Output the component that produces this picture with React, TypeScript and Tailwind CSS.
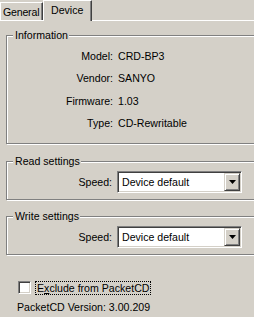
const sunken =
  'border border-t-[#808080] border-l-[#808080] border-r-white border-b-white shadow-[inset_1px_1px_0_#404040,inset_-1px_-1px_0_#d4d0c8]';
const raised =
  'border border-t-[#d4d0c8] border-l-[#d4d0c8] border-r-[#404040] border-b-[#404040] shadow-[inset_1px_1px_0_#ffffff,inset_-1px_-1px_0_#808080]';
const etched =
  'relative border border-[#808080] shadow-[inset_1px_1px_0_#ffffff,1px_1px_0_#ffffff]';

function Group({
  title,
  className,
  children,
}: {
  title: string;
  className: string;
  children: React.ReactNode;
}) {
  return (
    <div className={`${etched} ${className}`}>
      <span className="absolute -top-[7px] left-[6px] bg-[#d4d0c8] pl-[2px] pr-[1px]">
        {title}
      </span>
      {children}
    </div>
  );
}

function InfoRow({ label, value, className }: { label: string; value: string; className: string }) {
  return (
    <div className={`flex ${className}`}>
      <span className="w-[106px] text-right">{label}</span>
      <span className="pl-[5px]">{value}</span>
    </div>
  );
}

function Combo() {
  return (
    <div className="mt-[9px] flex items-center">
      <span className="w-[105px] text-right">Speed:</span>
      <div className={`ml-[5px] flex h-[22px] w-[125px] items-center bg-white p-[1px] ${sunken}`}>
        <span className="flex-1 pl-[3px]">Device default</span>
        <div className={`flex h-[18px] w-[16px] items-center justify-center bg-[#d4d0c8] ${raised}`}>
          <svg width="7" height="4" viewBox="0 0 7 4">
            <path d="M0 0h7L3.5 4z" fill="#000" />
          </svg>
        </div>
      </div>
    </div>
  );
}

export default function App() {
  return (
    <div className="h-[317px] w-[254px] overflow-hidden bg-[#d4d0c8] font-['Liberation_Sans',Arial,sans-serif] text-[10.6px] leading-[13px] text-black">
      <div className="flex h-[20px] items-end">
        <div className="h-[18px] w-[43px] whitespace-nowrap border-l border-t border-r border-l-white border-t-white border-r-[#404040] pl-[2px] pt-[3px] tracking-[-0.2px] shadow-[inset_-1px_0_0_#808080]">
          General
        </div>
        <div className="relative z-10 -mb-px h-[21px] w-[49px] border-l border-t border-r border-l-white border-t-white border-r-[#404040] bg-[#d4d0c8] pl-[7px] pt-[3px] shadow-[inset_-1px_0_0_#808080]">
          Device
        </div>
      </div>
      <div className="border-t border-white pl-[6px] pt-[14px]">
        <div className="w-[270px]">
          <Group title="Information" className="h-[109px]">
            <InfoRow label="Model:" value="CRD-BP3" className="mt-[14px]" />
            <InfoRow label="Vendor:" value="SANYO" className="mt-[9px]" />
            <InfoRow label="Firmware:" value="1.03" className="mt-[10px]" />
            <InfoRow label="Type:" value="CD-Rewritable" className="mt-[9px]" />
          </Group>
          <Group title="Read settings" className="mt-[17px] h-[39px]">
            <Combo />
          </Group>
          <Group title="Write settings" className="mt-[16px] h-[39px]">
            <Combo />
          </Group>
        </div>
        <div className="mt-[26px] flex items-start pl-[12px]">
          <div className={`h-[13px] w-[13px] bg-white ${sunken}`} />
          <span className="ml-[4px] h-[14px] border border-dotted border-black px-[1px] leading-[12px]">
            E<span className="underline">x</span>clude from PacketCD
          </span>
        </div>
        <div className="mt-[6px] pl-[11px]">PacketCD Version: 3.00.209</div>
      </div>
    </div>
  );
}
